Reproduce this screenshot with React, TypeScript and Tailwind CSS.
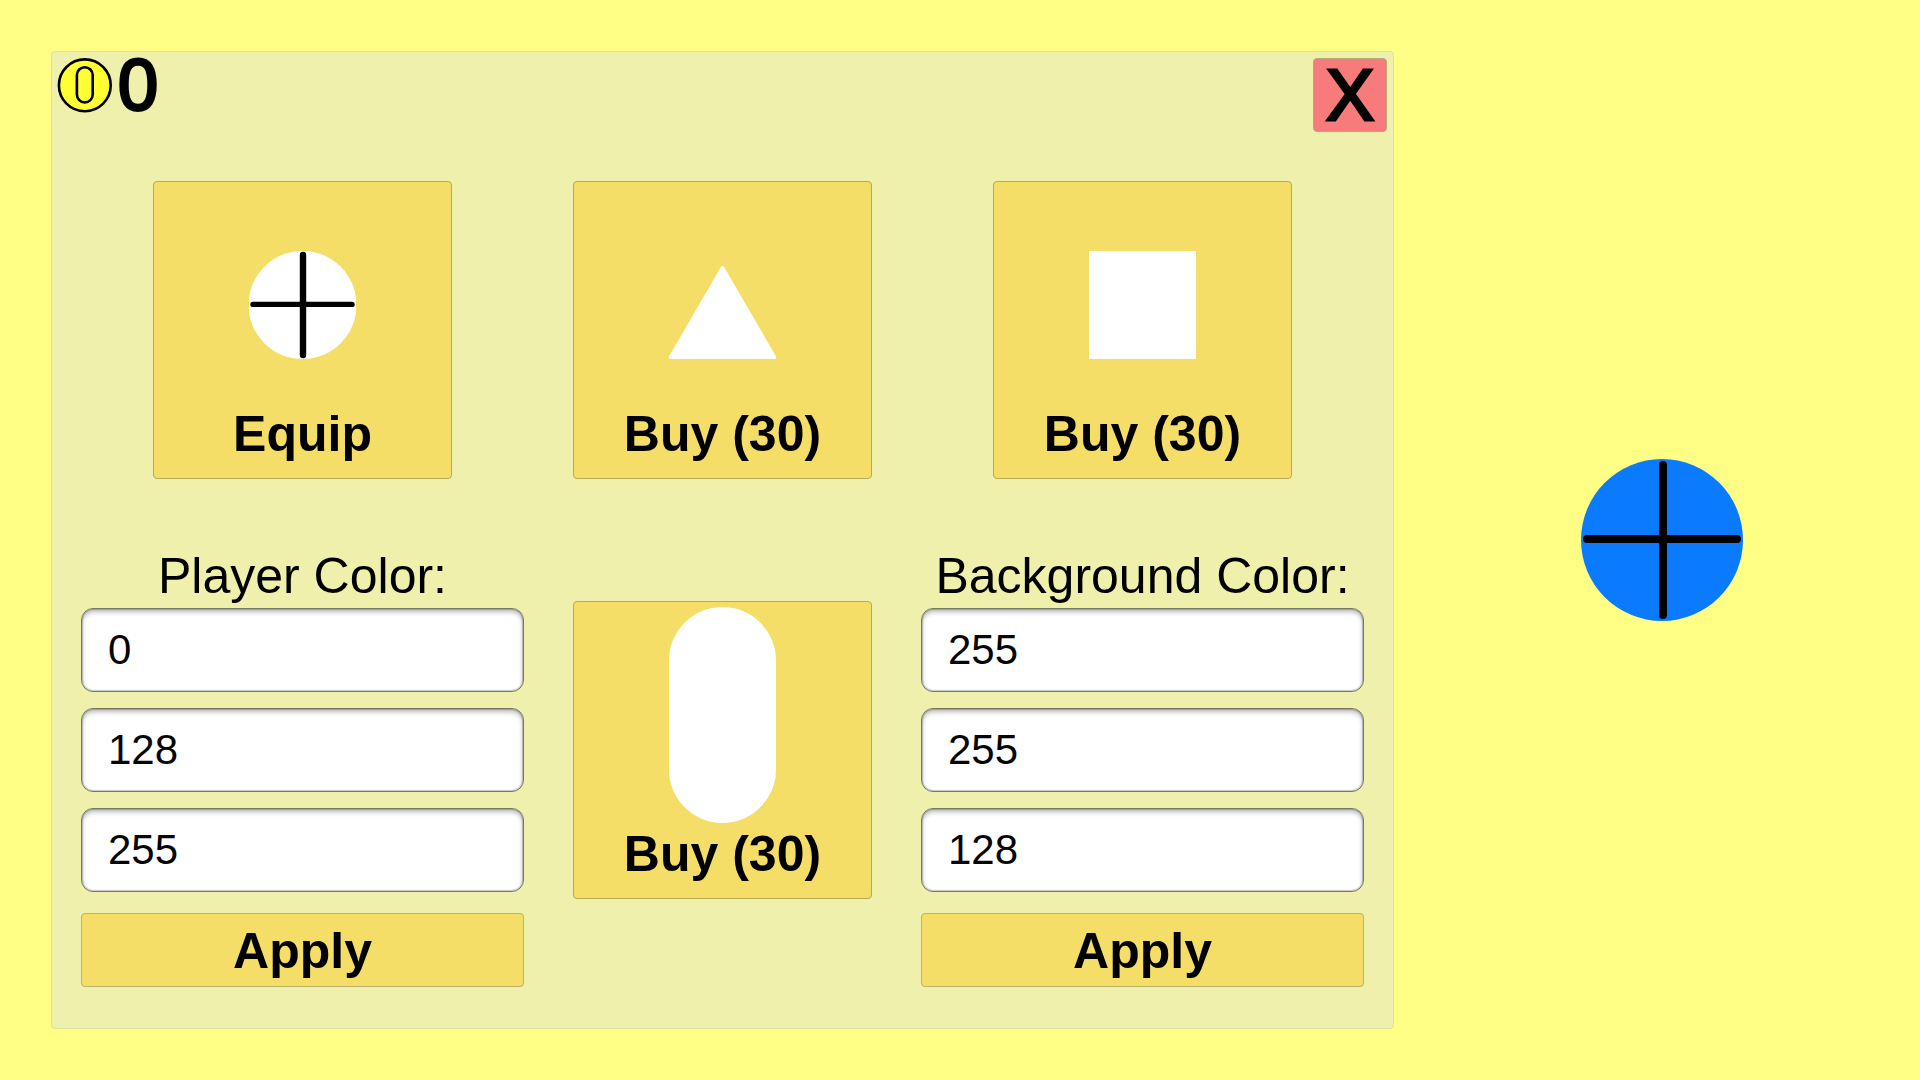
import type { ReactNode } from "react";

const cardClass =
  "flex h-[298px] w-[299px] flex-col items-center justify-between justify-self-center rounded-[4px] border border-[#b9a954] bg-[#f5de68] pt-[5px] pb-[19px] text-black";

function CoinIcon() {
  return (
    <svg width="55" height="55" viewBox="0 0 55 55" fill="#ffff33" stroke="#000" strokeWidth="2.6" aria-hidden="true">
      <circle cx="27.8" cy="27.3" r="25.9" />
      <rect x="19.9" y="9.2" width="15.8" height="35.2" rx="7.9" />
    </svg>
  );
}

// Every skin shares one drawing area, short shapes sit lower in it
function Skin({ children }: { children: ReactNode }) {
  return (
    <svg width="107" height="216" viewBox="0 0 107 216" fill="#fff" aria-hidden="true">
      {children}
    </svg>
  );
}

function ShopCard({ label, children }: { label: string; children: ReactNode }) {
  return (
    <button type="button" className={cardClass}>
      <Skin>{children}</Skin>
      <span className="text-[50px] leading-[50px] font-bold">{label}</span>
    </button>
  );
}

function ColorForm({ id, title, values }: { id: string; title: string; values: string[] }) {
  const channels = ["red", "green", "blue"];

  return (
    <form className="flex flex-col" onSubmit={(e) => e.preventDefault()}>
      <label htmlFor={`${id}-red`} className="text-center text-[50px] leading-[52px] whitespace-nowrap">
        {title}
      </label>
      <div className="mt-[6px] flex flex-col gap-4">
        {values.map((value, i) => (
          <input
            key={channels[i]}
            id={`${id}-${channels[i]}`}
            aria-label={i === 0 ? undefined : `${title} ${channels[i]}`}
            type="text"
            inputMode="numeric"
            defaultValue={value}
            className="h-[84px] w-full rounded-[12px] border border-[#77785c] bg-white px-[26px] text-[42px] text-[#050505] shadow-[inset_0_3px_5px_rgba(0,0,0,0.28),inset_0_0_1px_1px_rgba(0,0,0,0.2)] outline-none"
          />
        ))}
      </div>
      <button
        type="submit"
        className="mt-[21px] h-[74px] rounded-[4px] border border-[#b9b26a] bg-[#f5de68] pt-[2px] text-[50px] leading-[50px] font-bold"
      >
        Apply
      </button>
    </form>
  );
}

function Player() {
  return (
    <svg width="162" height="162" viewBox="0 0 162 162" aria-label="Player" role="img">
      <circle cx="81" cy="81" r="81" fill="#0a7aff" />
      <path d="M82 6v150M6 80h150" stroke="#000" strokeWidth="8" strokeLinecap="round" />
    </svg>
  );
}

export default function App() {
  return (
    <main className="flex min-h-screen bg-[#ffff85] py-[51px] pl-[51px] font-['Liberation_Sans',Arial,sans-serif] text-black">
      <section className="flex-1 rounded-[4px] border border-[#dfe09b] bg-[#eff0ac] px-[5px] pt-[6px] pb-[41px]">
        <header className="flex items-start justify-between pr-px">
          <div className="flex h-[55px] items-center gap-[6px]">
            <CoinIcon />
            <span className="text-[72px] leading-[55px] [-webkit-text-stroke:3px_#000]">0</span>
          </div>
          <button
            type="button"
            aria-label="Close"
            className="size-[74px] rounded-[4px] border border-[#b9a97c] bg-[#f77b7b] text-[72px] leading-[72px] [-webkit-text-stroke:3px_#000]"
          >
            X
          </button>
        </header>

        <div className="mt-[49px] grid grid-cols-[443fr_299fr_443fr] gap-x-[49px] gap-y-[71px] px-6">
          <ShopCard label="Equip">
            <circle cx="53.5" cy="118" r="54" />
            <path d="M54 68v100" stroke="#000" strokeWidth="6.4" strokeLinecap="round" />
            <path d="M4 117.4h99" stroke="#000" strokeWidth="5.4" strokeLinecap="round" />
          </ShopCard>
          <ShopCard label="Buy (30)">
            <path d="M52.5 79h2L107 169.5v2.5H0v-2.5z" />
          </ShopCard>
          <ShopCard label="Buy (30)">
            <rect y="64" width="107" height="108" />
          </ShopCard>

          <ColorForm id="player" title="Player Color:" values={["0", "128", "255"]} />
          <div className="flex justify-center pt-[51px]">
            <ShopCard label="Buy (30)">
              <rect width="107" height="216" rx="53.5" />
            </ShopCard>
          </div>
          <ColorForm id="background" title="Background Color:" values={["255", "255", "128"]} />
        </div>
      </section>

      <aside className="flex w-[526px] items-center justify-center pl-[10px]">
        <Player />
      </aside>
    </main>
  );
}
